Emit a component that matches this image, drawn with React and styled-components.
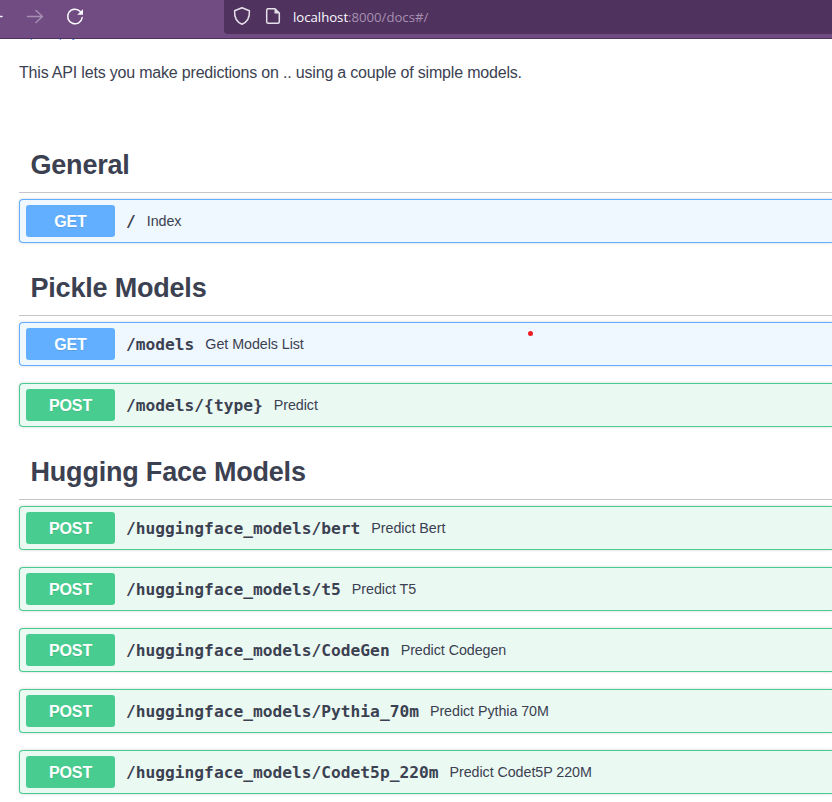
import React from "react";
import styled, { createGlobalStyle } from "styled-components";

const Global = createGlobalStyle`
  * { box-sizing: border-box; }
  html, body { margin: 0; background: #fff; overflow: hidden; }
`;

const METHODS = {
  GET: { solid: "#61affe", tint: "#eff7ff" },
  POST: { solid: "#49cc90", tint: "#ebf9f3" },
};

const Page = styled.div`
  height: 802px;
  overflow: hidden;
  font-family: "Liberation Sans", Arial, sans-serif;
  color: #3b4151;
`;
const Toolbar = styled.header`
  display: flex;
  align-items: flex-start;
  height: 39px;
  background: #704c82;
  border-bottom: 1px solid #50315f;
`;
const NavIcons = styled.nav`
  width: 224px;
  height: 34px;
  flex: none;
`;
const AddressBar = styled.div`
  display: flex;
  align-items: center;
  flex: 1;
  height: 34px;
  background: #50325f;
  border-bottom-left-radius: 4px;
`;
const AddressIcons = styled.svg`
  width: 69px;
  height: 34px;
  flex: none;
`;
const Url = styled.span`
  font: 13.2px/20px "Open Sans", "Noto Sans", sans-serif;
  letter-spacing: -0.02px;
  color: #a691b0;
  white-space: nowrap;
`;
const Host = styled.span`
  color: #fbfbfe;
`;
const SpecLink = styled.div`
  height: 1px;
  overflow: hidden;
  padding-left: 19px;
  font-size: 13px;
  line-height: 15px;
  color: #4990e2;
  display: flex;
  align-items: flex-end;
`;
const Intro = styled.p`
  margin: 22px 0 53px 19px;
  font-size: 16px;
  letter-spacing: -0.19px;
  line-height: 22px;
`;
const Section = styled.section`
  margin-left: 19px;
  margin-bottom: 17px;
`;
const Heading = styled.h3`
  height: 56px;
  margin: 0 0 6px;
  padding: 0 11.5px;
  border-bottom: 1px solid rgba(59, 65, 81, 0.3);
  font-size: 27px;
  letter-spacing: -0.2px;
  line-height: 57px;
`;
const Operations = styled.div`
  display: grid;
  gap: 17px;
`;
const Operation = styled.div`
  display: flex;
  align-items: center;
  height: 44px;
  padding: 0 6px;
  border: 1px solid ${(p) => METHODS[p.$method].solid};
  border-right: 0;
  border-radius: 4px 0 0 4px;
  background: ${(p) => METHODS[p.$method].tint};
  box-shadow: 0 0 3px rgba(0, 0, 0, 0.19);
`;
const Method = styled.span`
  width: 89px;
  height: 32px;
  flex: none;
  border-radius: 3px;
  background: ${(p) => METHODS[p.$method].solid};
  color: #fff;
  font-size: 16px;
  letter-spacing: -0.1px;
  font-weight: 700;
  line-height: 34px;
  text-align: center;
  text-shadow: 0 1px 0 rgba(0, 0, 0, 0.1);
`;
const Path = styled.span`
  margin-left: 11px;
  padding-top: 2px;
  font: 700 16.23px/22px "DejaVu Sans Mono", monospace;
  white-space: nowrap;
`;
const Summary = styled.span`
  margin-left: 11px;
  font-size: 14.3px;
  letter-spacing: -0.06px;
  white-space: nowrap;
`;
const RedDot = styled.i`
  position: absolute;
  left: 527.5px;
  top: 330.5px;
  width: 5px;
  height: 5px;
  border-radius: 50%;
  background: #ed1c24;
`;

const SECTIONS = [
  { title: "General", ops: [["GET", "/", "Index"]] },
  {
    title: "Pickle Models",
    ops: [
      ["GET", "/models", "Get Models List"],
      ["POST", "/models/{type}", "Predict"],
    ],
  },
  {
    title: "Hugging Face Models",
    ops: [
      ["POST", "/huggingface_models/bert", "Predict Bert"],
      ["POST", "/huggingface_models/t5", "Predict T5"],
      ["POST", "/huggingface_models/CodeGen", "Predict Codegen"],
      ["POST", "/huggingface_models/Pythia_70m", "Predict Pythia 70M"],
      ["POST", "/huggingface_models/Codet5p_220m", "Predict Codet5P 220M"],
    ],
  },
];

export default function App() {
  return (
    <Page>
      <Global />
      <Toolbar>
        <NavIcons>
          <svg width="224" height="34" fill="none" strokeWidth="1.5" strokeLinecap="round" strokeLinejoin="round">
            <path d="M-8 16.5H2" stroke="#f6f2f8" />
            <path d="M27.5 16.5H42.5M36 10.5L42.5 16.5L36 22.5" stroke="#a68fb2" />
            <path d="M80.3 11.5A7.3 7.3 0 1 0 82.2 17.5" stroke="#fbfbfe" />
            <path d="M83 9.2V14.8H77.2Z" fill="#fbfbfe" stroke="none" />
          </svg>
        </NavIcons>
        <AddressBar>
          <AddressIcons viewBox="0 0 69 34" fill="none" stroke="#e6e0ea" strokeWidth="1.5" strokeLinejoin="round">
            <path d="M18 7.7L25.4 10.8C25.8 17.5 23.5 22 18 24.3C12.5 22 10.2 17.5 10.6 10.8Z" />
            <path d="M43.7 8.7H51L55.3 13V21.8Q55.3 23.3 53.8 23.3H44.2Q42.7 23.3 42.7 21.8V10.2Q42.7 8.7 44.2 8.7Z" />
            <path d="M50.5 8.7V13.5H55.3Z" fill="#e6e0ea" stroke="none" />
          </AddressIcons>
          <Url><Host>localhost</Host>:8000/docs#/</Url>
        </AddressBar>
      </Toolbar>
      <SpecLink>/openapi.json</SpecLink>
      <Intro>This API lets you make predictions on .. using a couple of simple models.</Intro>
      {SECTIONS.map((s) => (
        <Section key={s.title}>
          <Heading>{s.title}</Heading>
          <Operations>
            {s.ops.map(([method, path, summary]) => (
              <Operation key={path} $method={method}>
                <Method $method={method}>{method}</Method>
                <Path>{path}</Path>
                <Summary>{summary}</Summary>
              </Operation>
            ))}
          </Operations>
        </Section>
      ))}
      <RedDot />
    </Page>
  );
}
